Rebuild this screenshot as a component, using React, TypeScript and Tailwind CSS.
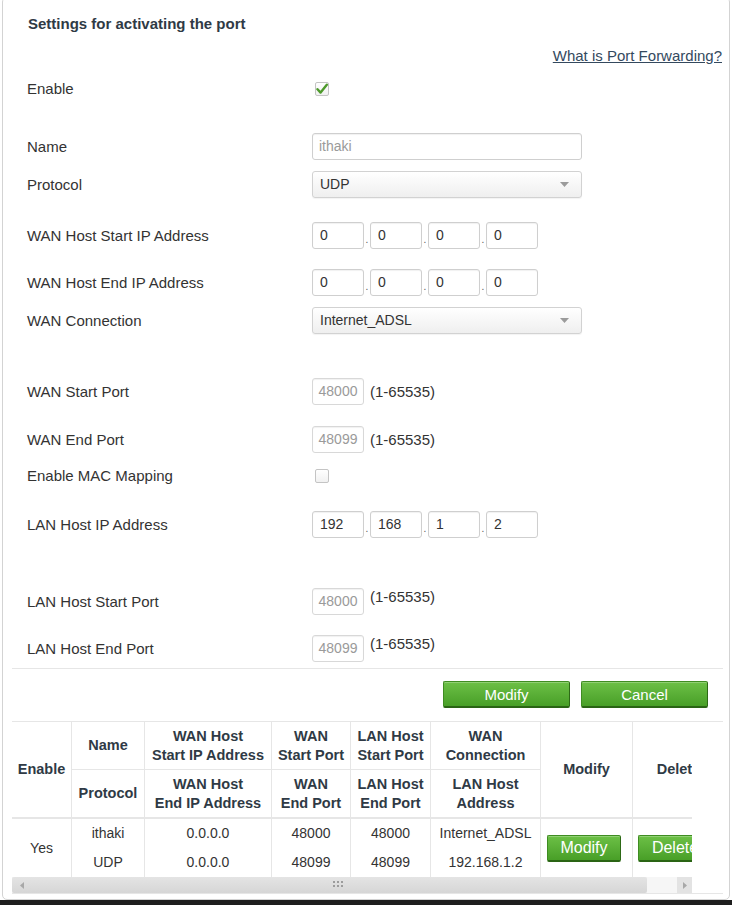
import React from "react";

const LABEL = "w-[285px] shrink-0 text-[15px] leading-[18px] text-[#333]";

function Check({ checked }: { checked?: boolean }) {
  return (
    <span className="ml-[3px] flex h-[14px] w-[14px] items-center justify-center rounded-[2px] border border-[#c4c4c4] bg-linear-to-b from-white to-[#f1f1f1]">
      {checked && (
        <svg width="12" height="12" viewBox="0 0 12 12" aria-hidden="true">
          <path d="M1.5 6.2 L4.6 9.6 L10.8 1.8" fill="none" stroke="#4e9a2c" strokeWidth="2.4" strokeLinecap="round" strokeLinejoin="round" />
        </svg>
      )}
    </span>
  );
}

function TextBox({ value, muted, className = "" }: { value: string; muted?: boolean; className?: string }) {
  return (
    <div
      className={`flex h-[27px] items-center rounded-[3px] border border-[#cfcfcf] bg-white text-[14px] shadow-[inset_0_1px_1px_rgba(0,0,0,0.06)] ${
        muted ? "text-[#9a9a9a]" : "text-[#333]"
      } ${className}`}
    >
      {value}
    </div>
  );
}

function Select({ value }: { value: string }) {
  return (
    <div className="flex h-[27px] w-[270px] items-center justify-between rounded-[3px] border border-[#d2d2d2] bg-linear-to-b from-white to-[#efefef] pl-[7px] pr-[12px] text-[14px] text-[#333] shadow-[0_1px_1px_rgba(0,0,0,0.05)]">
      <span>{value}</span>
      <svg width="9" height="5" viewBox="0 0 9 5" aria-hidden="true">
        <polygon points="0,0 9,0 4.5,5" fill="#9b9b9b" />
      </svg>
    </div>
  );
}

function IpBoxes({ parts }: { parts: string[] }) {
  return (
    <div className="flex items-center">
      {parts.map((p, i) => (
        <React.Fragment key={i}>
          {i > 0 && <span className="w-[6px] pt-[8px] text-center text-[10px] leading-none text-[#555]">.</span>}
          <TextBox value={p} className="w-[52px] pl-[7px]" />
        </React.Fragment>
      ))}
    </div>
  );
}

function PortBox({ value, top }: { value: string; top?: boolean }) {
  return (
    <div className={`flex ${top ? "items-start" : "items-center"}`}>
      <TextBox value={value} muted className="w-[52px] justify-center border-[#d8d8d8]" />
      <span className="ml-[6px] text-[15px] leading-[18px] text-[#333]">(1-65535)</span>
    </div>
  );
}

function Row({ label, mt, children }: { label: string; mt: string; children: React.ReactNode }) {
  return (
    <div className={`flex h-[27px] items-center ${mt}`}>
      <div className={LABEL}>{label}</div>
      {children}
    </div>
  );
}

function GreenButton({ children, className = "" }: { children: React.ReactNode; className?: string }) {
  return (
    <button
      type="button"
      className={`h-[27px] rounded-[2px] border border-[#3f8c22] border-r-[#2d6916] border-b-2 border-b-[#2a6414] bg-linear-to-b from-[#6cc046] to-[#489f27] text-[15px] leading-none text-white shadow-[inset_0_1px_0_rgba(255,255,255,0.25)] ${className}`}
    >
      {children}
    </button>
  );
}

const TH = "border-l border-[#e6e6e6] px-[4px] text-center align-middle text-[14.5px] font-bold leading-[19px] text-[#2f3a45]";
const TD = "border-l border-[#e6e6e6] text-[14px] leading-[29px] text-[#333]";

export default function App() {
  return (
    <div className="flex h-[905px] w-[732px] flex-col bg-white font-['Liberation_Sans',Arial,sans-serif]">
      <div className="-mt-[3px] ml-[2px] flex w-[728px] flex-1 flex-col rounded-[5px] border border-[#d3d3d3] bg-white">
        <h1 className="mt-[17px] pl-[25px] text-[15px] font-bold leading-[18px] text-[#2f3a45]">
          Settings for activating the port
        </h1>
        <div className="mt-[14px] pr-[7px] text-right leading-[18px]">
          <a className="text-[15px] text-[#34495e] underline">What is Port Forwarding?</a>
        </div>

        <div className="pl-[24px]">
          <Row label="Enable" mt="mt-[10px]">
            <Check checked />
          </Row>
          <Row label="Name" mt="mt-[31px]">
            <TextBox value="ithaki" muted className="w-[270px] pl-[6px]" />
          </Row>
          <Row label="Protocol" mt="mt-[11px]">
            <Select value="UDP" />
          </Row>
          <Row label="WAN Host Start IP Address" mt="mt-[24px]">
            <IpBoxes parts={["0", "0", "0", "0"]} />
          </Row>
          <Row label="WAN Host End IP Address" mt="mt-[20px]">
            <IpBoxes parts={["0", "0", "0", "0"]} />
          </Row>
          <Row label="WAN Connection" mt="mt-[11px]">
            <Select value="Internet_ADSL" />
          </Row>
          <Row label="WAN Start Port" mt="mt-[44px]">
            <PortBox value="48000" />
          </Row>
          <Row label="WAN End Port" mt="mt-[21px]">
            <PortBox value="48099" />
          </Row>
          <Row label="Enable MAC Mapping" mt="mt-[9px]">
            <Check />
          </Row>
          <Row label="LAN Host IP Address" mt="mt-[22px]">
            <IpBoxes parts={["192", "168", "1", "2"]} />
          </Row>
          <Row label="LAN Host Start Port" mt="mt-[50px]">
            <PortBox value="48000" top />
          </Row>
          <Row label="LAN Host End Port" mt="mt-[20px]">
            <PortBox value="48099" top />
          </Row>
        </div>

        <div className="mt-[6px] ml-[9px] mr-[6px] border-t border-[#e6e6e6]" />

        <div className="mt-[12px] flex justify-end gap-[11px] pr-[21px]">
          <GreenButton className="w-[127px]">Modify</GreenButton>
          <GreenButton className="w-[127px]">Cancel</GreenButton>
        </div>

        <div className="mt-[13px] ml-[9px] mr-[6px] border-y border-[#e6e6e6]">
          <div className="w-[680px] overflow-hidden">
            <table className="w-[712px] table-fixed border-separate border-spacing-0">
              <colgroup>
                <col className="w-[59px]" />
                <col className="w-[73px]" />
                <col className="w-[127px]" />
                <col className="w-[79px]" />
                <col className="w-[80px]" />
                <col className="w-[110px]" />
                <col className="w-[92px]" />
                <col className="w-[92px]" />
              </colgroup>
              <thead>
                <tr className="h-[48px]">
                  <th rowSpan={2} className={`${TH} border-l-0 border-b-2 px-0`}>Enable</th>
                  <th className={`${TH} border-b`}>Name</th>
                  <th className={`${TH} border-b`}>WAN Host<br />Start IP Address</th>
                  <th className={`${TH} border-b`}>WAN<br />Start Port</th>
                  <th className={`${TH} border-b`}>LAN Host<br />Start Port</th>
                  <th className={`${TH} border-b`}>WAN<br />Connection</th>
                  <th rowSpan={2} className={`${TH} border-b-2`}>Modify</th>
                  <th rowSpan={2} className={`${TH} border-b-2`}>Delete</th>
                </tr>
                <tr className="h-[49px]">
                  <th className={`${TH} border-b-2`}>Protocol</th>
                  <th className={`${TH} border-b-2`}>WAN Host<br />End IP Address</th>
                  <th className={`${TH} border-b-2`}>WAN<br />End Port</th>
                  <th className={`${TH} border-b-2`}>LAN Host<br />End Port</th>
                  <th className={`${TH} border-b-2`}>LAN Host<br />Address</th>
                </tr>
              </thead>
              <tbody>
                <tr className="h-[58px]">
                  <td className={`${TD} border-l-0 text-center align-middle`}>Yes</td>
                  <td className={`${TD} text-center align-top`}><div>ithaki</div><div>UDP</div></td>
                  <td className={`${TD} text-center align-top`}><div>0.0.0.0</div><div>0.0.0.0</div></td>
                  <td className={`${TD} text-center align-top`}><div>48000</div><div>48099</div></td>
                  <td className={`${TD} text-center align-top`}><div>48000</div><div>48099</div></td>
                  <td className={`${TD} text-center align-top`}><div>Internet_ADSL</div><div>192.168.1.2</div></td>
                  <td className={`${TD} pl-[6px] text-left align-middle`}>
                    <GreenButton className="w-[74px] text-[16px]">Modify</GreenButton>
                  </td>
                  <td className={`${TD} pl-[5px] text-left align-middle`}>
                    <GreenButton className="w-[74px] text-[16px]">Delete</GreenButton>
                  </td>
                </tr>
              </tbody>
            </table>
          </div>

          <div className="flex h-[16px] w-[680px] bg-[#f3f3f3]">
            <div className="relative flex w-[635px] items-center rounded-[2px] bg-linear-to-b from-[#e4e4e4] to-[#d6d6d6]">
              <svg className="ml-[8px]" width="4" height="7" viewBox="0 0 4 7" aria-hidden="true">
                <polygon points="4,0 4,7 0,3.5" fill="#a8a8a8" />
              </svg>
              <div className="absolute left-[321px] top-[4px] grid grid-cols-3 gap-[2px]">
                {Array.from({ length: 6 }).map((_, i) => (
                  <span key={i} className="h-[2px] w-[2px] bg-[#9c9c9c]" />
                ))}
              </div>
            </div>
            <div className="flex-1 bg-[#f6f6f6]" />
            <div className="flex w-[15px] items-center justify-center bg-[#e3e3e3]">
              <svg width="4" height="7" viewBox="0 0 4 7" aria-hidden="true">
                <polygon points="0,0 0,7 4,3.5" fill="#a8a8a8" />
              </svg>
            </div>
          </div>
        </div>
      </div>
      <div className="h-[5px] bg-[#1e1e1e]" />
    </div>
  );
}
